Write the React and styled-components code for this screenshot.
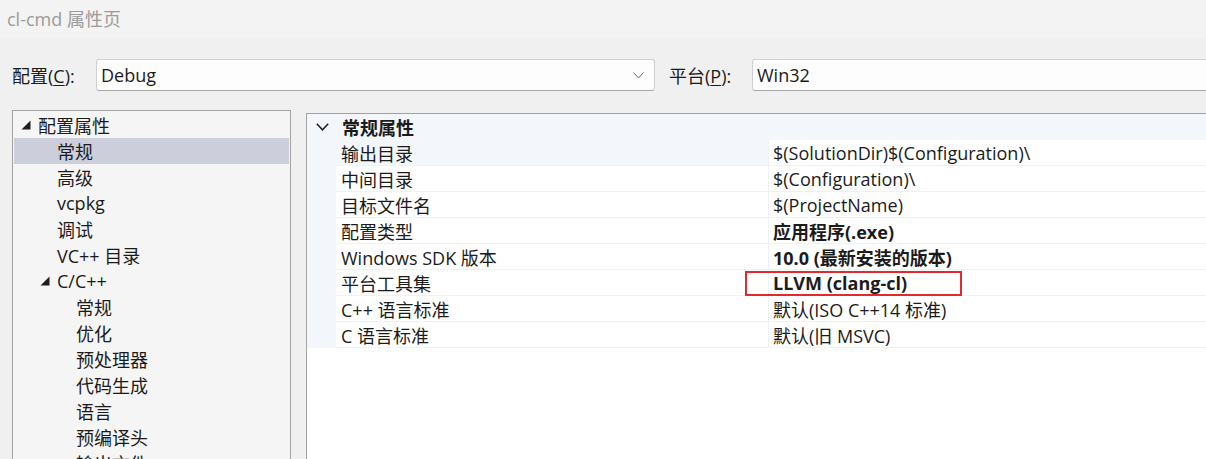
import React from "react";
import styled, { createGlobalStyle } from "styled-components";

const GlobalStyle = createGlobalStyle`
  html, body { margin: 0; padding: 0; background: #f0f0f0; }
  body {
    font-family: "Open Sans", "Noto Sans CJK SC", sans-serif;
    font-size: 18px;
    color: #1b1b1b;
    overflow: hidden;
  }
  * { box-sizing: border-box; }
`;

const Window = styled.div`
  width: 1206px;
  height: 459px;
  overflow: hidden;
  display: flex;
  flex-direction: column;
  background: #f0f0f0;
`;

const TitleBar = styled.div`
  height: 38px;
  flex: none;
  display: flex;
  align-items: center;
  padding-left: 7px;
  padding-bottom: 2px;
  background: #f3f3f3;
  color: #9b9b9b;
  font-size: 18px;
  white-space: nowrap;
`;

const ConfigBar = styled.div`
  flex: none;
  display: flex;
  align-items: center;
  padding: 21px 0 0 12px;
  white-space: nowrap;
`;

const FieldLabel = styled.label`
  width: ${(p) => p.$w}px;
  flex: none;
  u { text-decoration: underline; text-underline-offset: 2px; }
`;

const Combo = styled.div`
  width: ${(p) => p.$w}px;
  flex: none;
  height: 32px;
  display: flex;
  align-items: center;
  padding: 0 10px 0 4px;
  background: #fdfdfd;
  border: 1px solid #d0d0d0;
  border-bottom-color: #a9a9a9;
  border-radius: 3px;
  margin-right: ${(p) => p.$mr || 0}px;
`;

const ComboText = styled.span`
  flex: 1;
`;

const Chevron = styled.svg`
  flex: none;
  width: 11px;
  height: 7px;
`;

const Main = styled.div`
  flex: 1;
  min-height: 0;
  display: flex;
  gap: 15px;
  padding-left: 12px;
  margin-top: 19px;
`;

const Tree = styled.div`
  width: 279px;
  flex: none;
  background: #f5f5f5;
  border: 1px solid #a2a2a2;
  border-bottom: none;
  padding: 1px 1px 0;
  overflow: hidden;
`;

const TreeRow = styled.div`
  height: 26px;
  display: flex;
  align-items: center;
  padding-left: ${(p) => 7 + p.$level * 19}px;
  background: ${(p) => (p.$selected ? "#cccedb" : "transparent")};
  white-space: nowrap;
`;

const Caret = styled.span`
  width: 17px;
  flex: none;
  display: flex;
  align-items: center;
`;

const Grid = styled.div`
  flex: 1;
  min-width: 0;
  margin-top: 3px;
  background: #ffffff;
  border-top: 1px solid #a2a2a2;
  border-left: 1px solid #a2a2a2;
  overflow: hidden;
`;

const SectionHeader = styled.div`
  height: 26px;
  display: flex;
  align-items: center;
  background: #f3f6fb;
  padding-left: 9px;
  font-weight: 700;
  white-space: nowrap;
`;

const HeaderChevron = styled.svg`
  width: 13px;
  height: 8px;
  margin-right: 13px;
  flex: none;
`;

const PropRow = styled.div`
  height: 26px;
  display: flex;
  white-space: nowrap;
`;

const Gutter = styled.div`
  width: 29px;
  flex: none;
  background: #f3f6fb;
`;

const NameCell = styled.div`
  width: 432px;
  flex: none;
  display: flex;
  align-items: center;
  padding-left: 5px;
  background: ${(p) => (p.$selected ? "#f3f6fb" : "#ffffff")};
  border-bottom: 1px solid #eef1f8;
`;

const ValueCell = styled.div`
  flex: 1;
  position: relative;
  display: flex;
  align-items: center;
  padding-left: 4px;
  border-left: 1px solid #eef1f8;
  border-bottom: 1px solid #eef1f8;
  font-weight: ${(p) => (p.$bold ? 700 : 400)};
`;

const Highlight = styled.div`
  position: absolute;
  left: -24px;
  top: 1px;
  width: 217px;
  height: 25px;
  border: 2px solid #e5282d;
  pointer-events: none;
`;

const TriangleIcon = () => (
  <svg width="10" height="10" viewBox="0 0 10 10">
    <polygon points="9.5,0.5 9.5,9.5 0.5,9.5" fill="#1e1e1e" />
  </svg>
);

const treeItems = [
  { label: "配置属性", level: 0, expanded: true },
  { label: "常规", level: 1, selected: true },
  { label: "高级", level: 1 },
  { label: "vcpkg", level: 1 },
  { label: "调试", level: 1 },
  { label: "VC++ 目录", level: 1 },
  { label: "C/C++", level: 1, expanded: true },
  { label: "常规", level: 2 },
  { label: "优化", level: 2 },
  { label: "预处理器", level: 2 },
  { label: "代码生成", level: 2 },
  { label: "语言", level: 2 },
  { label: "预编译头", level: 2 },
  { label: "输出文件", level: 2 },
];

const props = [
  { name: "输出目录", value: "$(SolutionDir)$(Configuration)\\", selected: true },
  { name: "中间目录", value: "$(Configuration)\\" },
  { name: "目标文件名", value: "$(ProjectName)" },
  { name: "配置类型", value: "应用程序(.exe)", bold: true },
  { name: "Windows SDK 版本", value: "10.0 (最新安装的版本)", bold: true },
  { name: "平台工具集", value: "LLVM (clang-cl)", bold: true, mark: true },
  { name: "C++ 语言标准", value: "默认(ISO C++14 标准)" },
  { name: "C 语言标准", value: "默认(旧 MSVC)" },
];

export default function App() {
  return (
    <>
      <GlobalStyle />
      <Window>
        <TitleBar>cl-cmd 属性页</TitleBar>
        <ConfigBar>
          <FieldLabel $w={84}>
            配置(<u>C</u>):
          </FieldLabel>
          <Combo $w={559} $mr={14}>
            <ComboText>Debug</ComboText>
            <Chevron viewBox="0 0 11 7">
              <polyline points="0.5,0.5 5.5,6 10.5,0.5" fill="none" stroke="#6a6a6a" strokeWidth="1" />
            </Chevron>
          </Combo>
          <FieldLabel $w={83}>
            平台(<u>P</u>):
          </FieldLabel>
          <Combo $w={480}>
            <ComboText>Win32</ComboText>
          </Combo>
        </ConfigBar>
        <Main>
          <Tree>
            {treeItems.map((it, i) => (
              <TreeRow key={i} $level={it.level} $selected={it.selected}>
                <Caret>{it.expanded ? <TriangleIcon /> : null}</Caret>
                {it.label}
              </TreeRow>
            ))}
          </Tree>
          <Grid>
            <SectionHeader>
              <HeaderChevron viewBox="0 0 13 8">
                <polyline points="0.8,0.8 6.5,6.8 12.2,0.8" fill="none" stroke="#1e1e1e" strokeWidth="1.5" />
              </HeaderChevron>
              常规属性
            </SectionHeader>
            {props.map((p, i) => (
              <PropRow key={i}>
                <Gutter />
                <NameCell $selected={p.selected}>{p.name}</NameCell>
                <ValueCell $bold={p.bold}>
                  {p.value}
                  {p.mark ? <Highlight /> : null}
                </ValueCell>
              </PropRow>
            ))}
          </Grid>
        </Main>
      </Window>
    </>
  );
}
